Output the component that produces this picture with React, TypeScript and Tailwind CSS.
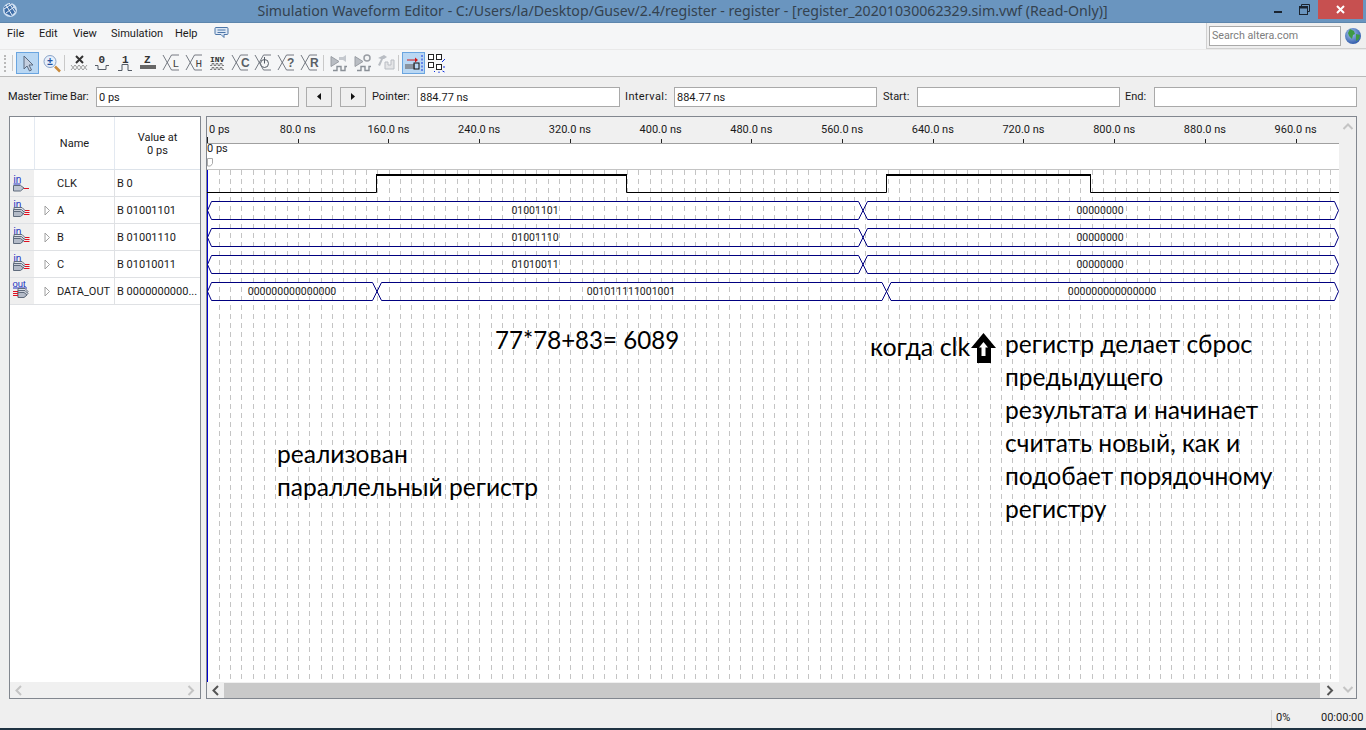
import React from "react";

const UI = { fontFamily: 'Roboto, "Noto Sans", sans-serif' };
const TITLE = { fontFamily: '"Noto Sans", "Open Sans", sans-serif' };
const NOTE = { fontFamily: 'Lato, "Open Sans", sans-serif' };
const MONO = '"Liberation Mono", monospace';
const SANS = '"Liberation Sans", sans-serif';

const X0 = 207.3;
const PX10 = 11.34;
const gridXs = Array.from({ length: 99 }, (_, i) => X0 + PX10 * (i + 1));
const rulerLabels = ["0 ps", "80.0 ns", "160.0 ns", "240.0 ns", "320.0 ns", "400.0 ns", "480.0 ns", "560.0 ns", "640.0 ns", "720.0 ns", "800.0 ns", "880.0 ns", "960.0 ns"];

function Ruler() {
  return (
    <svg width="1132" height="53" className="block" style={UI}>
      <rect width="1132" height="26" fill="#f0f0f0" />
      <rect y="26" width="1132" height="1" fill="#a0a0a0" />
      <rect y="27" width="1132" height="25" fill="#fff" />
      <rect y="52" width="1132" height="1" fill="#c4c4c4" />
      {rulerLabels.map((l, i) => {
        const x = i * 90.72;
        if (i === 0) return <text key={l} x={2} y={16} fontSize="11" fill="#1a1a1a">{l}</text>;
        return (
          <g key={l}>
            <text x={x} y={16} fontSize="11" fill="#1a1a1a" textAnchor="middle">{l}</text>
            <rect x={Math.round(x)} y={22} width="1" height="4" fill="#222" />
          </g>
        );
      })}
      <rect x="0" y="20" width="1" height="6" fill="#222" />
      <text x={0} y={35} fontSize="11" fill="#1a1a1a">0 ps</text>
      <path d="M0.5 41.500h5v5l-2 2.500h-3z" fill="#fff" stroke="#aaa" />
    </svg>
  );
}

function Bus({ y, h, xs, labels }: { y: number; h: number; xs: number[]; labels: { x: number; t: string }[] }) {
  const t = y + 0.5, b = y + h + 0.5, m = y + h / 2 + 0.5;
  const left = 0.5, right = 1131.5;
  let d = `M${left} ${m}L${left + 4} ${t}`;
  let e = `M${left} ${m}L${left + 4} ${b}`;
  xs.forEach((x) => {
    d += `L${x - 4.5} ${t}L${x + 4.5} ${b}`;
    e += `L${x - 4.5} ${b}L${x + 4.5} ${t}`;
    const tmp = d; d = e; e = tmp;
  });
  d += `L${right - 4} ${t}L${right} ${m}`;
  e += `L${right - 4} ${b}L${right} ${m}`;
  return (
    <g>
      <path d={d} fill="none" stroke="#000080" strokeWidth="1" />
      <path d={e} fill="none" stroke="#000080" strokeWidth="1" />
      {labels.map((l) => (
        <text key={l.x} x={l.x} y={m + 3.5} fontSize="10.5" fill="#1a1a1a" textAnchor="middle" style={UI}>{l.t}</text>
      ))}
    </g>
  );
}

function Wave() {
  const o = 207;
  return (
    <svg width="1132" height="512" className="block absolute inset-0">
      {gridXs.map((x) => (
        <line key={x} x1={Math.round(x - o) + 0.5} x2={Math.round(x - o) + 0.5} y1="0" y2="512" stroke="#c4c4c4" strokeDasharray="5 4" />
      ))}
      <rect x="0" y="0" width="1" height="512" fill="#0000d0" />
      <path d={`M0 22.500H${376.5 - o}V5`} fill="none" stroke="#000" />
      <path d={`M${376 - o} 5H${627 - o}`} stroke="#000" strokeWidth="2" />
      <path d={`M${626.5 - o} 5V22.500H${886.5 - o}V5`} fill="none" stroke="#000" />
      <path d={`M${886 - o} 5H${1091 - o}`} stroke="#000" strokeWidth="2" />
      <path d={`M${1090.5 - o} 5V22.500H1132`} fill="none" stroke="#000" />
      <Bus y={31} h={18} xs={[863 - o]} labels={[{ x: 535 - o, t: "01001101" }, { x: 1100 - o, t: "00000000" }]} />
      <Bus y={58} h={18} xs={[863 - o]} labels={[{ x: 535 - o, t: "01001110" }, { x: 1100 - o, t: "00000000" }]} />
      <Bus y={85} h={18} xs={[863 - o]} labels={[{ x: 535 - o, t: "01010011" }, { x: 1100 - o, t: "00000000" }]} />
      <Bus y={112} h={18} xs={[377 - o, 886.5 - o]} labels={[{ x: 292 - o, t: "000000000000000" }, { x: 631 - o, t: "001011111001001" }, { x: 1112 - o, t: "000000000000000" }]} />
    </svg>
  );
}

function PortIcon({ out, bus }: { out?: boolean; bus?: boolean }) {
  const red = "#e01020";
  const f = { fontFamily: SANS };
  if (out) {
    return (
      <svg width="24" height="26" className="absolute left-0 top-0" style={f}>
        <text x="2.500" y="9" fontSize="9.500" fill="#2030c0">out</text>
        <rect x="3" y="9.500" width="14" height="1" fill="#2030c0" />
        <path d="M8 10.500h7l3 3-3 3H8z" fill="#dfe3ea" stroke="#5f6b7c" />
        <path d="M8 12.500h7l3 3-3 3H8z" fill="#c9ced8" stroke="#5f6b7c" />
        <path d="M8 14.500h6l3 2.500-3 2.500H8z" fill="#b4bbc8" stroke="#5f6b7c" />
        <path d="M3 13.500h5M3 15.500h5M3 17.500h5" stroke={red} />
      </svg>
    );
  }
  if (bus) {
    return (
      <svg width="24" height="26" className="absolute left-0 top-0" style={f}>
        <text x="3.500" y="11" fontSize="10" fill="#2030c0">in</text>
        <path d="M4 10.500h8l3 3-3 3H4z" fill="#dfe3ea" stroke="#5f6b7c" />
        <path d="M3.500 12.500h8l3 3-3 3h-8z" fill="#c9ced8" stroke="#5f6b7c" />
        <path d="M3.500 14.500h7l3 2.500-3 2.500h-7z" fill="#b4bbc8" stroke="#5f6b7c" />
        <path d="M15 13.500h4.500M15 15.500h4.500M14 17.500h5.500" stroke={red} />
      </svg>
    );
  }
  return (
    <svg width="24" height="26" className="absolute left-0 top-0" style={f}>
      <text x="3.500" y="12.500" fontSize="10" fill="#2030c0">in</text>
      <rect x="3.500" y="13.500" width="7" height="1" fill="#2030c0" />
      <path d="M3.500 15.500h7l3.500 2.500-3.500 3h-7z" fill="#bfc6d2" stroke="#5f6b7c" />
      <path d="M14 18.500h5" stroke={red} />
    </svg>
  );
}

const rows = [
  { n: "CLK", v: "B 0", arrow: false, bus: false, out: false },
  { n: "A", v: "B 01001101", arrow: true, bus: true, out: false },
  { n: "B", v: "B 01001110", arrow: true, bus: true, out: false },
  { n: "C", v: "B 01010011", arrow: true, bus: true, out: false },
  { n: "DATA_OUT", v: "B 0000000000...", arrow: true, bus: true, out: true },
];

function Chev({ dir, c }: { dir: "l" | "r" | "d" | "u"; c: string }) {
  const d =
    dir === "l" ? "M8 2L3.500 6.500 8 11" : dir === "r" ? "M3.500 2L8 6.500 3.500 11" : dir === "d" ? "M1.500 4L6 8.500 10.500 4" : "M1.500 9L6 4.500 10.500 9";
  return (
    <svg width="12" height="13" className="block"><path d={d} fill="none" stroke={c} strokeWidth="2" /></svg>
  );
}

function Field({ w, label, value, lw, track = "" }: { w: number; label: string; value?: string; lw: number; track?: string }) {
  return (
    <div className="flex items-center">
      <span className={`text-[11px] text-[#1a1a1a] whitespace-nowrap pt-[1px] ${track}`} style={{ width: lw }}>{label}</span>
      <div className="h-[20px] border border-[#a9a9a9] bg-white px-[2px] text-[11px] leading-[20px] text-[#1a1a1a]" style={{ width: w }}>{value}</div>
    </div>
  );
}

const S = "#555c66";
function TI({ children, w = 23 }: { children: React.ReactNode; w?: number }) {
  return <svg width={w} height="20" viewBox={`0 0 ${w} 20`} className="block shrink-0" style={{ fontFamily: MONO }}>{children}</svg>;
}
function XL({ c, bold }: { c: string; bold?: boolean }) {
  return (
    <TI>
      <path d="M1 2L9.500 17H17M1 17L9.500 2H17" fill="none" stroke={S} strokeWidth="0.8" />
      {bold ? (
        <text x="10" y="14" fontSize="12" fontWeight="700" fill="#5a5f66" style={{ fontFamily: SANS }}>{c}</text>
      ) : (
        <text x="10.500" y="14" fontSize="11" fill="#444" style={{ fontFamily: MONO }}>{c}</text>
      )}
    </TI>
  );
}

function Toolbar() {
  return (
    <div className="h-[26px] flex items-center bg-[#f5f6f7] border-t border-[#e9e9e9] border-b border-b-[#b9b9b9] box-content shrink-0">
      <div className="w-[4px] ml-[4px] h-[17px] border-l-2 border-dotted border-[#b9b9b9]" />
      <div className="w-px h-[16px] bg-[#c9c9c9] ml-[4px]" />
      <div className="ml-[3px] w-[23px] h-[22px] bg-[#b9d7f3] border border-[#6aa5e0] flex items-center justify-center">
        <svg width="14" height="17"><path d="M3 1v13l3-3 2.500 5 2-1L8 10h4z" fill="#c4cfe0" stroke="#5a6a80" /></svg>
      </div>
      <div className="ml-[2px] w-[22px] h-[22px] flex items-center justify-center">
        <svg width="18" height="19">
          <circle cx="7" cy="7.500" r="6" fill="#e6effb" stroke="#8aa4c8" />
          <text x="7" y="11" fontSize="10" fontWeight="700" fill="#2050a0" textAnchor="middle" style={{ fontFamily: SANS }}>±</text>
          <path d="M12 12.500l5 5" stroke="#c98a3c" strokeWidth="2.500" />
        </svg>
      </div>
      <div className="w-px h-[16px] bg-[#c9c9c9] ml-[1px] mr-[5px]" />
      <div className="flex items-center">
        <TI>
          <path d="M6 3l7 7M13 3l-7 7" stroke="#333" strokeWidth="2" />
          <path d="M1 12l2 2.500 2-2.500 2 2.500 2-2.500 2 2.500 2-2.500 2 2.500 2-2.500M1 17l2-2.500 2 2.500 2-2.500 2 2.500 2-2.500 2 2.500 2-2.500 2 2.500" fill="none" stroke="#777" strokeWidth="0.7" />
        </TI>
        <TI>
          <text x="5.500" y="10" fontSize="11" fontWeight="700" fill="#333">0</text>
          <path d="M2 12.500h3v4h8v-4h3" fill="none" stroke={S} />
        </TI>
        <TI>
          <text x="6" y="10" fontSize="11" fontWeight="700" fill="#333">1</text>
          <path d="M2 17.500h4v-6h6v6h4" fill="none" stroke={S} />
        </TI>
        <TI>
          <text x="5" y="10" fontSize="11" fontWeight="700" fill="#333">Z</text>
          <rect x="1" y="12" width="16" height="4" fill="#666" />
        </TI>
        <XL c="L" /><XL c="H" />
        <TI>
          <text x="2" y="8.500" fontSize="8" fontWeight="700" fill="#333">INV</text>
          <path d="M2 12.500h2v-2h2v2h2v-2h2v2h2v-2h2v2h2M2 16.500h2v-2h2v2h2v-2h2v2h2v-2h2v2h2" fill="none" stroke="#666" strokeWidth="0.8" />
        </TI>
        <XL c="C" bold />
        <TI>
          <path d="M1 2L9.500 17H17M1 17L9.500 2H17" fill="none" stroke={S} strokeWidth="0.8" />
          <circle cx="10.500" cy="10.500" r="4" fill="#f5f6f7" stroke={S} /><path d="M10.500 4v6.500" stroke={S} />
        </TI>
        <XL c="?" bold /><XL c="R" bold />
      </div>
      <div className="w-px h-[16px] bg-[#c9c9c9] mr-[6px]" />
      <TI>
        <path d="M1 3.500l8 5-8 5z" fill="#b9bdc3" stroke="#9a9ea4" />
        <path d="M9 4h4l3-2v7l-3-2H9z" fill="#c4c8ce" />
        <path d="M3 17.500h4v-4h4v4h4v-4h2" fill="none" stroke="#8a9097" strokeWidth="1.400" />
      </TI>
      <div className="ml-[1px]" />
      <TI>
        <path d="M1 3.500l8 5-8 5z" fill="#b9bdc3" stroke="#9a9ea4" />
        <circle cx="13" cy="5" r="3" fill="none" stroke="#9a9ea4" strokeWidth="1.500" />
        <path d="M3 17.500h4v-4h4v4h4v-4h2" fill="none" stroke="#8a9097" strokeWidth="1.400" />
      </TI>
      <TI w={21}>
        <path d="M1 5l6-3 3 2-3 2-1 0-3 7-2-1 3-6z" fill="#b9bdc3" />
        <path d="M8 16V9h3v3h3V7h3v9z" fill="#e4e5e7" stroke="#b9bdc3" />
      </TI>
      <div className="w-px h-[16px] bg-[#c9c9c9] mr-[3px]" />
      <div className="w-[23px] h-[22px] bg-[#b9d7f3] border border-[#6aa5e0] flex items-center justify-center">
        <svg width="20" height="18">
          <path d="M3 6h9" stroke="#d01818" /><path d="M11 3.500l3 2.500-3 2.500z" fill="#d01818" />
          <rect x="1" y="10" width="10" height="5" fill="#8a94a0" />
          <rect x="10" y="9" width="5" height="6" fill="none" stroke="#111" />
          <path d="M18 1v16" stroke="#1030e0" strokeDasharray="2 1.500" />
        </svg>
      </div>
      <svg width="18" height="20" className="ml-[2px] block">
        <rect x="1.500" y="1.500" width="5" height="5" fill="#fff" stroke="#222" />
        <rect x="9.500" y="1.500" width="5" height="5" fill="#fff" stroke="#222" />
        <rect x="1.500" y="9.500" width="5" height="5" fill="#fff" stroke="#222" />
        <rect x="9.500" y="11.500" width="5" height="5" fill="#fff" stroke="#222" />
        <path d="M15 9l3-3M8 18l-1 1M16 14h2M15.500 18l2 1M12 18.500v1.500" stroke="#1030e0" />
      </svg>
    </div>
  );
}

export default function App() {
  return (
    <div className="w-[1366px] h-[730px] overflow-hidden flex flex-col bg-[#efefef] relative" style={UI}>
      {/* title bar */}
      <div className="h-[23px] shrink-0 bg-[#6a95bf] relative flex items-center justify-center border-b border-[#5d86ad]">
        <svg width="18" height="18" className="absolute left-[1px] top-[1px]">
          <circle cx="9" cy="9" r="7" fill="#cfe0f2" />
          <path d="M3 6l7-4 5 8-5 5-6-3z" fill="#3f6ea8" />
          <path d="M5 4l6 10M8 2l6 9M3 8l8-5M5 12l8-6" stroke="#e8f0f8" strokeWidth="1" />
        </svg>
        <span className="text-[#34424f] text-[14.150px] leading-[22px] whitespace-nowrap ml-[-1px]" style={TITLE}>Simulation Waveform Editor - C:/Users/la/Desktop/Gusev/2.4/register - register - [register_20201030062329.sim.vwf (Read-Only)]</span>
        <div className="absolute left-[1274px] top-[11px] w-[8px] h-[2px] bg-[#1a2430]" />
        <svg width="11" height="11" className="absolute left-[1299px] top-[4px]">
          <path d="M2.500 2.500v-2h8v7h-2" fill="none" stroke="#1a2430" />
          <rect x="0.500" y="2.500" width="8" height="8" fill="none" stroke="#1a2430" />
          <rect x="0.500" y="2.500" width="8" height="2" fill="#1a2430" />
        </svg>
        <div className="absolute left-[1318px] top-0 w-[45px] h-[19px] bg-[#c75050] flex items-center justify-center">
          <svg width="9" height="9"><path d="M1 1l7 7M8 1L1 8" stroke="#fff" strokeWidth="2" /></svg>
        </div>
      </div>
      {/* menu bar */}
      <div className="h-[26px] shrink-0 bg-[#f5f6f7] relative flex items-center text-[11px] text-[#1a1a1a] pl-[7px] pb-[3px]">
        <span className="w-[32px]">File</span>
        <span className="w-[34px]">Edit</span>
        <span className="w-[38px]">View</span>
        <span className="w-[64px]">Simulation</span>
        <span className="w-[39px]">Help</span>
        <svg width="15" height="14" className="mb-[4px]">
          <path d="M2 1.500h11a1 1 0 0 1 1 1v5a1 1 0 0 1-1 1H10v3L7 8.500H2a1 1 0 0 1-1-1v-5a1 1 0 0 1 1-1z" fill="#dde8f5" stroke="#4d76a8" />
          <path d="M3.500 4h8M3.500 6.500h8" stroke="#4d76a8" />
        </svg>
        <div className="absolute right-0 top-0 w-[160px] h-[26px] bg-[#efefef] border-l border-b border-[#d0d0d0] flex items-center pl-[2px] pt-[1px]">
          <div className="w-[132px] h-[20px] bg-white border border-[#a9a9a9] px-[2px] text-[10.700px] leading-[18px] text-[#7d7d7d]">Search altera.com</div>
          <svg width="18" height="18" className="ml-[3px]">
            <defs>
              <radialGradient id="glb" cx="40%" cy="35%" r="70%"><stop offset="0" stopColor="#a8c6ee" /><stop offset="1" stopColor="#2a56a8" /></radialGradient>
            </defs>
            <circle cx="9" cy="9" r="8" fill="url(#glb)" />
            <path d="M6 2l4 2 1 3-2 1-1 4-3-3-1-3zM12 7l4 1-1 4-3 2z" fill="#3e9a44" />
          </svg>
        </div>
      </div>
      <Toolbar />
      {/* time bar */}
      <div className="h-[39px] shrink-0 flex items-center pl-[8px] text-[#1a1a1a]">
        <Field lw={88} w={203} label="Master Time Bar:" value="0 ps" track="tracking-[-0.2px]" />
        <div className="w-[26px] h-[20px] ml-[7px] bg-[#efefef] border border-[#acacac] flex items-center justify-center">
          <svg width="5" height="7"><path d="M4 0v7L0 3.500z" fill="#111" /></svg>
        </div>
        <div className="w-[26px] h-[20px] ml-[8px] mr-[6px] bg-[#efefef] border border-[#acacac] flex items-center justify-center">
          <svg width="5" height="7"><path d="M0 0v7l4-3.500z" fill="#111" /></svg>
        </div>
        <Field lw={45} w={203} label="Pointer:" value="884.77 ns" />
        <div className="w-[5px]" />
        <Field lw={49} w={203} label="Interval:" value="884.77 ns" track="tracking-[0.4px]" />
        <div className="w-[6px]" />
        <Field lw={34} w={203} label="Start:" />
        <div className="w-[5px]" />
        <Field lw={29} w={203} label="End:" />
      </div>
      {/* panels */}
      <div className="h-[583px] shrink-0 flex pl-[9px] items-stretch">
        <div className="w-[192px] border border-[#82878f] bg-white flex flex-col">
          <div className="h-[53px] shrink-0 flex border-b border-[#dde3ea] text-[#1a1a1a] text-[11px]">
            <div className="w-[25px] border-r border-[#e3e9f1]" />
            <div className="w-[80px] border-r border-[#e3e9f1] flex items-center justify-center pt-[2px]">Name</div>
            <div className="flex-1 flex items-center justify-center text-center leading-[13px] pt-[2px]">Value at<br />0 ps</div>
          </div>
          {rows.map((r) => (
            <div key={r.n} className="h-[27px] shrink-0 flex border-b border-[#dfe1e4] text-[11px] text-[#1a1a1a]">
              <div className="w-[24px] bg-[#efefef] relative"><PortIcon out={r.out} bus={r.bus} /></div>
              <div className="w-[81px] border-r border-[#dfe1e4] flex items-center relative whitespace-nowrap">
                {r.arrow && (
                  <svg width="7" height="11" className="absolute left-[10px] top-[8px]"><path d="M1 1l4.500 4.500L1 10z" fill="#fff" stroke="#a0a0a0" /></svg>
                )}
                <span className="pl-[23px] pt-[3px]">{r.n}</span>
              </div>
              <div className="flex-1 pl-[2px] pt-[3px] flex items-center whitespace-nowrap overflow-hidden">{r.v}</div>
            </div>
          ))}
          <div className="flex-1" />
          <div className="h-[16px] shrink-0 bg-[#f0f0f0] flex items-center justify-between px-[3px]">
            <Chev dir="l" c="#c4c4c4" /><Chev dir="r" c="#c4c4c4" />
          </div>
        </div>
        <div className="w-[5px]" />
        <div className="w-[1151px] border border-[#82878f] flex bg-white">
          <div className="w-[1132px] shrink-0 flex flex-col min-w-0">
            <Ruler />
            <div className="relative flex-1">
              <Wave />
              <div className="absolute left-[288px] top-[153px] text-[24.100px] leading-[33px] text-black whitespace-nowrap" style={NOTE}>77*78+83= 6089</div>
              <div className="absolute left-[70px] top-[267px] w-[300px] text-[24.600px] leading-[33px] text-black" style={NOTE}>реализован<br />параллельный регистр</div>
              <div className="absolute left-[663px] top-[160px] text-[25px] leading-[33px] text-black whitespace-nowrap" style={NOTE}>когда clk</div>
              <svg width="26" height="30" className="absolute left-[764px] top-[163px]">
                <path d="M12.500 0L25 15H20V30H6V15H0Z" fill="#000" />
                <path d="M12.500 9L17 14.500H14.500V23H10.500V14.500H8Z" fill="#fff" />
              </svg>
              <div className="absolute left-[798px] top-[157px] w-[290px] text-[24.600px] leading-[33px] text-black" style={NOTE}>регистр делает сброс<br />предыдущего<br />результата и начинает<br />считать новый, как и<br />подобает порядочному<br />регистру</div>
            </div>
            <div className="h-[16px] shrink-0 flex items-center bg-[#f0f0f0]">
              <div className="w-[17px] flex justify-center"><Chev dir="l" c="#555" /></div>
              <div className="flex-1 h-[15px] bg-[#c9c9c9]" />
              <div className="w-[19px] flex justify-center"><Chev dir="r" c="#555" /></div>
            </div>
          </div>
          <div className="flex-1 bg-[#f0f0f0] flex flex-col justify-between items-center pt-[3px] pb-[2px]">
            <Chev dir="u" c="#c4c4c4" />
            <Chev dir="d" c="#c4c4c4" />
          </div>
        </div>
      </div>
      {/* status */}
      <div className="flex-1 relative text-[11px] text-[#1a1a1a]">
        <div className="absolute left-[1271px] top-[11px] w-px h-[18px] bg-[#d4d4d4]" />
        <span className="absolute left-[1276px] top-[11px]">0%</span>
        <span className="absolute left-[1321px] top-[11px]">00:00:00</span>
      </div>
      <div className="h-[2px] shrink-0 bg-[#1f3342]" />
    </div>
  );
}
